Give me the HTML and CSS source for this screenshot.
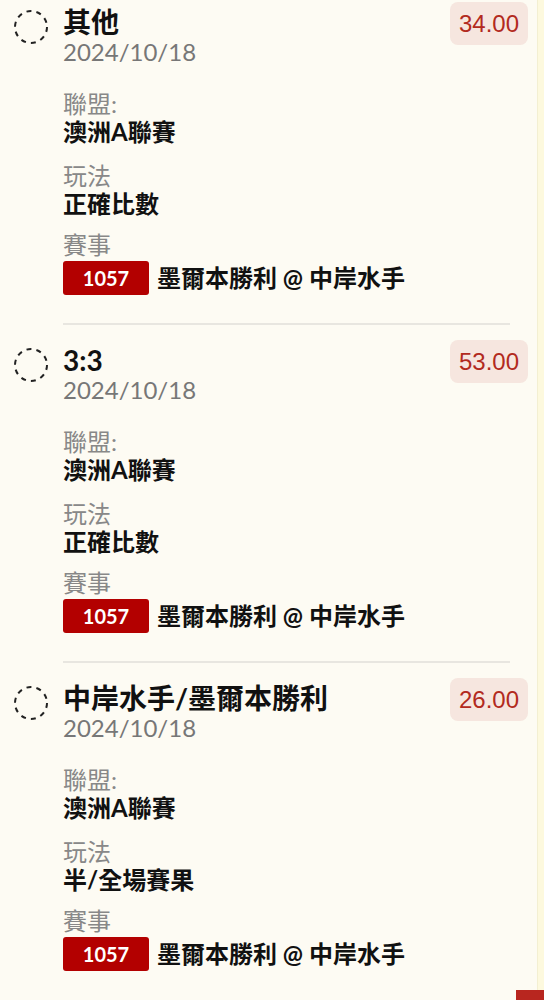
FILE: index.html
```html
<!DOCTYPE html>
<html lang="zh-Hant">
<head>
  <meta charset="UTF-8">
  <title>Bet Slip</title>
  <link rel="stylesheet" href="styles.css">
</head>
<body>
  <div class="list">
    <div class="bet">
      <svg class="check" width="34" height="34" viewBox="0 0 34 34"><circle cx="17" cy="17" r="16" /></svg>
      <div class="bet-body">
        <div class="head">
          <div class="head-text">
            <div class="title">其他</div>
            <div class="date">2024/10/18</div>
          </div>
          <div class="odds">34.00</div>
        </div>
        <div class="field field-first">
          <div class="label">聯盟:</div>
          <div class="value">澳洲A聯賽</div>
        </div>
        <div class="field field-second">
          <div class="label">玩法</div>
          <div class="value">正確比數</div>
        </div>
        <div class="field">
          <div class="label">賽事</div>
          <div class="match"><span class="match-no">1057</span><span class="value">墨爾本勝利 @ 中岸水手</span></div>
        </div>
        <div class="rule"></div>
      </div>
    </div>
    <div class="bet">
      <svg class="check" width="34" height="34" viewBox="0 0 34 34"><circle cx="17" cy="17" r="16" /></svg>
      <div class="bet-body">
        <div class="head">
          <div class="head-text">
            <div class="title">3:3</div>
            <div class="date">2024/10/18</div>
          </div>
          <div class="odds">53.00</div>
        </div>
        <div class="field field-first">
          <div class="label">聯盟:</div>
          <div class="value">澳洲A聯賽</div>
        </div>
        <div class="field field-second">
          <div class="label">玩法</div>
          <div class="value">正確比數</div>
        </div>
        <div class="field">
          <div class="label">賽事</div>
          <div class="match"><span class="match-no">1057</span><span class="value">墨爾本勝利 @ 中岸水手</span></div>
        </div>
        <div class="rule"></div>
      </div>
    </div>
    <div class="bet">
      <svg class="check" width="34" height="34" viewBox="0 0 34 34"><circle cx="17" cy="17" r="16" /></svg>
      <div class="bet-body">
        <div class="head">
          <div class="head-text">
            <div class="title">中岸水手/墨爾本勝利</div>
            <div class="date">2024/10/18</div>
          </div>
          <div class="odds">26.00</div>
        </div>
        <div class="field field-first">
          <div class="label">聯盟:</div>
          <div class="value">澳洲A聯賽</div>
        </div>
        <div class="field field-second">
          <div class="label">玩法</div>
          <div class="value">半/全場賽果</div>
        </div>
        <div class="field">
          <div class="label">賽事</div>
          <div class="match"><span class="match-no">1057</span><span class="value">墨爾本勝利 @ 中岸水手</span></div>
        </div>
        <div class="rule"></div>
      </div>
    </div>
  </div>
  <div class="edge"></div>
  <div class="fab"></div>
</body>
</html>
```

FILE: styles.css
```css
body {
  margin: 0;
  background: #fdfbf3;
  color: #111;
  font-family: Lato, "Noto Sans CJK TC", sans-serif;
  overflow: hidden;
}
.list {
  padding-right: 7px;
}
.bet {
  display: flex;
  padding: 15px 9px 0 14px;
}
.bet:first-child {
  padding-top: 2px;
}
.check {
  flex: none;
  margin-top: 8px;
}
.check circle {
  fill: none;
  stroke: #222;
  stroke-width: 2;
  stroke-dasharray: 5 5.05;
}
.bet-body {
  flex: 1;
  margin-left: 15px;
}
.head {
  display: flex;
  justify-content: space-between;
  align-items: flex-start;
}
.title {
  font-size: 28px;
  font-weight: 700;
  line-height: 32px;
  margin-top: 4px;
}
.date {
  font-size: 24px;
  color: #777;
  line-height: 28px;
}
.odds {
  background: #f6e6df;
  color: #b22a20;
  font-family: "Liberation Sans", Arial, sans-serif;
  font-size: 24px;
  line-height: 43px;
  padding: 0 9px;
  border-radius: 8px;
}
.field {
  margin-top: 13px;
}
.field-first {
  margin-top: 24px;
}
.field-second {
  margin-top: 16px;
}
.label {
  font-size: 24px;
  line-height: 28px;
  color: #888;
}
.value {
  font-size: 24px;
  line-height: 28px;
  font-weight: 700;
}
.match {
  display: flex;
  align-items: center;
  gap: 8px;
  margin-top: 2px;
}
.match-no {
  width: 86px;
  height: 34px;
  line-height: 34px;
  text-align: center;
  background: #b30000;
  color: #fff;
  font-size: 20px;
  font-weight: 700;
  border-radius: 3px;
}
.rule {
  margin: 28px 18px 0 0;
  border-top: 2px solid #e8e6e0;
}
.bet:last-child .rule {
  border-top-color: transparent;
}
.edge {
  position: fixed;
  top: 0;
  right: 0;
  bottom: 0;
  width: 6px;
  background: #fdf9de;
  border-left: 1px solid #f3efd2;
}
.fab {
  position: fixed;
  right: 0;
  bottom: 0;
  width: 28px;
  height: 10px;
  background: #b8261f;
}
```
